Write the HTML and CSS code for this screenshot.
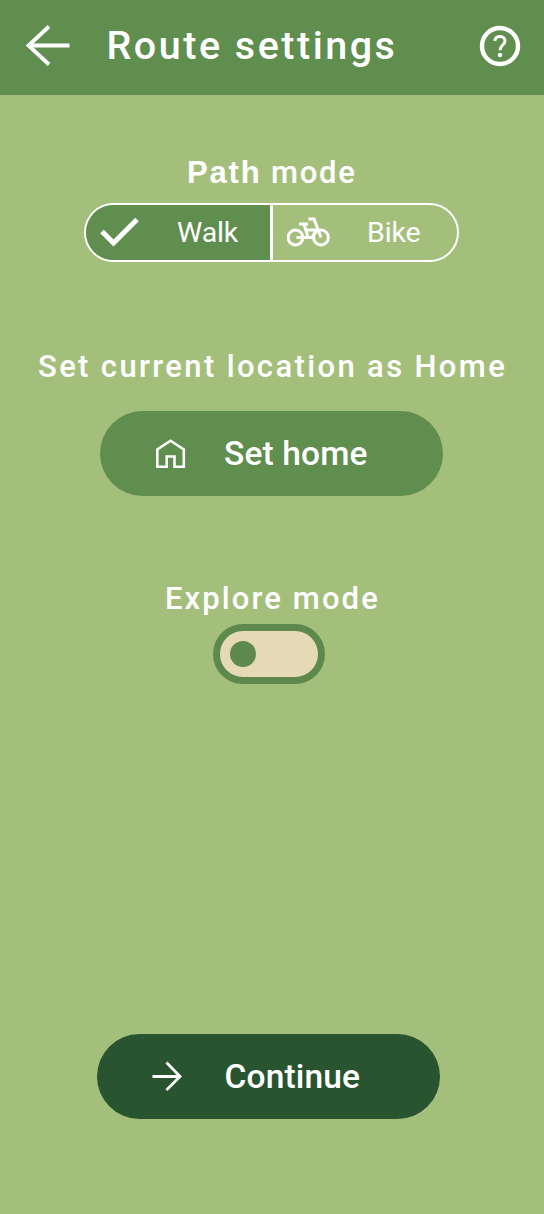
FILE: index.html
```html
<!DOCTYPE html>
<html lang="en">
<head>
<meta charset="utf-8">
<title>Route settings</title>
<link rel="stylesheet" href="styles.css">
</head>
<body>
<header class="bar">
  <svg class="back" width="46" height="44" viewBox="0 0 46 44"><path d="M25 3.500 4.500 22.500 25 41.500M4 22.500H45.500"/></svg>
  <h1 class="title">Route settings</h1>
  <svg class="help" width="42" height="42" viewBox="0 0 42 42"><circle cx="21" cy="21" r="18"/><path d="M15.700 16C16.200 13 18 11.500 21 11.500C24.200 11.500 26 13.500 26 16C26 20 21 20.200 21 25.300"/><circle class="dot" cx="21" cy="30" r="2.300"/></svg>
</header>
<main class="content">
  <h2 class="label path-label"><span class="alt">Path</span> mode</h2>
  <div class="segments">
    <button class="segment selected">
      <svg class="check" width="42" height="32" viewBox="0 0 42 32"><path d="M3 15.500 14.500 27 38 3.500"/></svg>
      <span class="walk">Walk</span>
    </button>
    <button class="segment">
      <svg class="bike" width="44" height="32" viewBox="0 0 44 32"><circle cx="8.500" cy="20.500" r="7.400"/><circle cx="34" cy="20.500" r="7.400"/><path d="M9.500 20.500H25L29.500 13H19M12 7H21M17 7 21 20M21.500 2H27L34 20.500"/></svg>
      <span class="bike-text">Bike</span>
    </button>
  </div>
  <h2 class="label home-label">Set current location as Home</h2>
  <button class="pill home">
    <svg class="house" width="32" height="32" viewBox="0 0 32 32"><path d="M2.300 28.800V11.500L15.500 2.700 28.800 11.500V28.800H19.500V18.500H11.700V28.800Z"/></svg>
    <span class="home-text">Set home</span>
  </button>
  <h2 class="label explore-label">Explore mode</h2>
  <div class="toggle" role="switch" aria-checked="false"><div class="knob"></div></div>
  <button class="pill continue">
    <svg class="forward" width="32" height="32" viewBox="0 0 32 32"><path d="M15.500 2.500 29 16.500 15.500 30M1.500 16.500H29"/></svg>
    <span class="continue-text">Continue</span>
  </button>
</main>
</body>
</html>
```
FILE: styles.css
```css
* { box-sizing: border-box; }
body {
  margin: 0;
  height: 1214px;
  background: #a4bf7c;
  color: #fff;
  font-family: Roboto, sans-serif;
}
svg { fill: none; stroke: #fff; flex: none; display: block; }
button { margin: 0; padding: 0; border: 0; color: inherit; font: inherit; }
span { white-space: pre; }
.bar {
  height: 95px;
  background: #5f8e4e;
  display: flex;
  align-items: flex-start;
}
.back { margin: 23px 0 0 24px; stroke-width: 3.8; }
.title {
  margin: 23px 0 0 36.500px;
  width: 372.500px;
  font-size: 39.5px;
  line-height: 46px;
  font-weight: 500;
  letter-spacing: 2.5px;
  white-space: nowrap;
}
.help { margin-top: 25px; stroke-width: 4.4; }
.help path { stroke-width: 3; }
.help .dot { fill: #fff; stroke: none; }
.content { display: flex; flex-direction: column; align-items: flex-start; }
.label {
  margin: 0;
  font-size: 31px;
  line-height: 36px;
  font-weight: 500;
  white-space: nowrap;
}
.path-label { margin: 60px 0 0 187px; letter-spacing: 1.8px; }
.alt { font-family: "Liberation Sans", sans-serif; font-weight: 700; }
.segments {
  margin: 12px 0 0 84px;
  width: 375px;
  height: 59px;
  border: 2px solid #fff;
  border-radius: 30px;
  display: flex;
  overflow: hidden;
}
.segment { display: flex; width: 184px; height: 55px; background: none; font-size: 28.5px; line-height: 34px; }
.selected { width: 187px; background: #5f8e4e; border-right: 3px solid #fff; }
.check { margin: 11px 0 0 13px; stroke-width: 5; }
.walk { margin: 11px 0 0 36px; letter-spacing: -0.2px; }
.bike { margin: 12px 0 0 14px; stroke-width: 3; }
.bike-text { margin: 11px 0 0 36px; letter-spacing: -0.1px; }
.home-label { margin: 87px 0 0 38px; letter-spacing: 2.36px; }
.pill { width: 343px; height: 85px; border-radius: 42.500px; display: flex; font-size: 33.5px; line-height: 40px; font-weight: 500; letter-spacing: 0.15px; }
.home { margin: 26px 0 0 100px; background: #5f8e4e; }
.house { margin: 27px 0 0 55px; stroke-width: 2.6; }
.home-text { margin: 23px 0 0 37px; }
.explore-label { margin: 85px 0 0 165px; letter-spacing: 2.1px; }
.toggle {
  margin: 7px 0 0 213px;
  width: 112px;
  height: 60px;
  border: 7.500px solid #5d8a4c;
  border-radius: 30px;
  background: #e6d9b6;
  padding: 9.500px;
}
.knob { width: 26px; height: 26px; border-radius: 50%; background: #5d8a4c; }
.continue { margin: 350px 0 0 97px; background: #285430; }
.forward { margin: 26px 0 0 54px; stroke-width: 2.8; }
.continue-text { margin: 23px 0 0 41.500px; }
```
